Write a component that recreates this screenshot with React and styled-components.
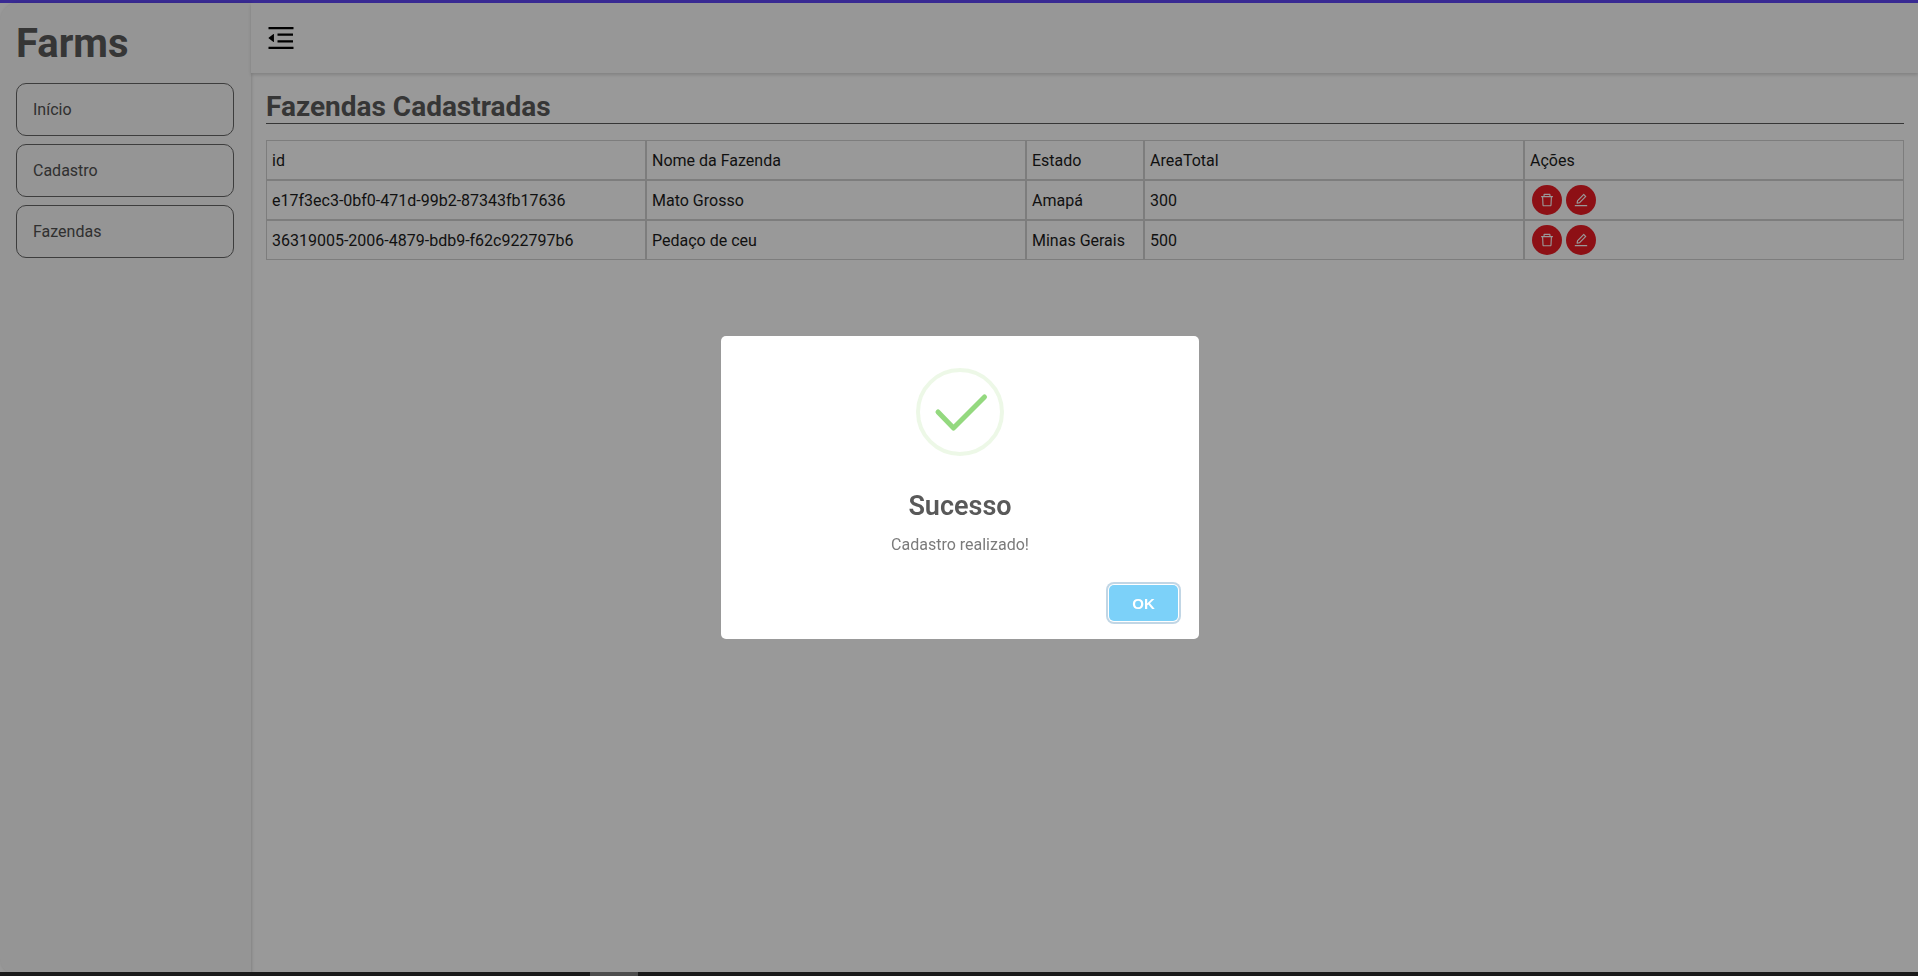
import styled, { createGlobalStyle } from "styled-components"
import { AiOutlineDelete, AiOutlineEdit, AiOutlineMenuFold } from "react-icons/ai"

const Global = createGlobalStyle`
  html, body { margin: 0; padding: 0; height: 100%; overflow: hidden; }
  body { font-family: Roboto, "Liberation Sans", sans-serif; background: #fff; }
  * { box-sizing: border-box; }
`
const Page = styled.div`
  height: 976px;
  display: flex;
  flex-direction: column;
`
const TopLine = styled.div`
  height: 3px;
  background: #5f47f5;
`
const Main = styled.div`
  flex: 1;
  display: flex;
  min-height: 0;
`
const Sidebar = styled.aside`
  width: 251px;
  padding: 16px 17px 13px 16px;
  background: #f8f8f8;
  border-radius: 18px 0 0 18px;
  box-shadow: 1px 0 3px rgba(0, 0, 0, 0.15);
`
const Logo = styled.h1`
  margin: 0 0 14px;
  font-size: 40px;
  line-height: 50px;
  font-weight: 700;
  color: #5a5a5a;
`
const NavList = styled.nav`
  display: flex;
  flex-direction: column;
  gap: 8px;
`
const NavItem = styled.a`
  height: 53px;
  padding-left: 16px;
  display: flex;
  align-items: center;
  font-size: 16px;
  color: #505050;
  border: 1px solid #666;
  border-radius: 10px;
`
const Content = styled.div`
  flex: 1;
  min-width: 0;
`
const Header = styled.header`
  height: 70px;
  padding: 0 14px;
  display: flex;
  align-items: center;
  font-size: 32px;
  color: #000;
  background: #fcfcfc;
  box-shadow: 0 2px 3px rgba(0, 0, 0, 0.15);
`
const Section = styled.section`
  padding: 16px 14px 0 15px;
`
const Title = styled.h2`
  margin: 0 0 16px;
  height: 35px;
  font-size: 28px;
  line-height: 35px;
  font-weight: 700;
  color: #5a5a5a;
  border-bottom: 1px solid #5a5a5a;
`
const Table = styled.table`
  width: 100%;
  table-layout: fixed;
  border-collapse: separate;
  border-spacing: 0;
  font-size: 16px;
  color: #1c1c1c;
`
const Th = styled.th`
  height: 40px;
  padding: 0 5px;
  font-weight: 400;
  text-align: left;
  border: 1px solid #d0d0d0;
  &:nth-child(1), &:nth-child(2), &:nth-child(4) { width: 380px; }
  &:nth-child(3) { width: 118px; }
`
const Td = styled.td`
  height: 40px;
  padding: 0 5px;
  border: 1px solid #d0d0d0;
`
const Actions = styled.div`
  display: flex;
  gap: 4px;
  padding-left: 2px;
`
const RoundButton = styled.button`
  width: 30px;
  height: 30px;
  padding: 0;
  display: flex;
  align-items: center;
  justify-content: center;
  font-size: 16px;
  color: #fff;
  background: #ec1b24;
  border: none;
  border-radius: 50%;
`
const BottomBar = styled.div`
  position: fixed;
  left: 0;
  right: 0;
  bottom: 0;
  z-index: 20;
  height: 4px;
  background: #1a1a1a;
`
const Thumb = styled.div`
  width: 48px;
  height: 4px;
  margin-left: 590px;
  background: #4d4d4d;
`
const Overlay = styled.div`
  position: fixed;
  inset: 0;
  z-index: 10;
  display: flex;
  align-items: flex-start;
  justify-content: center;
  padding: 336px 0 0 2px;
  background: rgba(0, 0, 0, 0.4);
`
const Modal = styled.div`
  width: 478px;
  height: 303px;
  padding-top: 32px;
  background: #fff;
  border-radius: 5px;
  display: flex;
  flex-direction: column;
  align-items: center;
`
const ModalTitle = styled.div`
  margin-top: 33px;
  font-size: 27px;
  line-height: 34px;
  font-weight: 600;
  color: #595959;
`
const ModalText = styled.div`
  margin-top: 11px;
  font-size: 16px;
  line-height: 22px;
  color: #7b7b7b;
`
const ModalFooter = styled.div`
  align-self: stretch;
  margin-top: 29px;
  padding-right: 21px;
  display: flex;
  justify-content: flex-end;
`
const OkButton = styled.button`
  width: 69px;
  height: 36px;
  padding: 0;
  font-family: "Liberation Sans", Arial, sans-serif;
  font-size: 15px;
  font-weight: 700;
  color: #fff;
  background: #7cd1f9;
  border: none;
  border-radius: 5px;
  box-shadow: 0 0 0 1px #fff, 0 0 0 3px rgba(43, 114, 165, 0.29);
`

const farms = [
  { id: "e17f3ec3-0bf0-471d-99b2-87343fb17636", name: "Mato Grosso", state: "Amapá", area: 300 },
  { id: "36319005-2006-4879-bdb9-f62c922797b6", name: "Pedaço de ceu", state: "Minas Gerais", area: 500 },
]

const SuccessIcon = () => (
  <svg width="88" height="88" viewBox="0 0 88 88">
    <circle cx="44" cy="44" r="42" fill="none" stroke="#a5dc86" strokeOpacity="0.2" strokeWidth="4" />
    <path d="M22 44l15.500 16 31-31" fill="none" stroke="#94d97f" strokeWidth="5" strokeLinecap="round" strokeLinejoin="round" />
  </svg>
)

const App = () => {
  return (
    <>
      <Global />
      <Page>
        <TopLine />
        <Main>
          <Sidebar>
            <Logo>Farms</Logo>
            <NavList>
              <NavItem>Início</NavItem>
              <NavItem>Cadastro</NavItem>
              <NavItem>Fazendas</NavItem>
            </NavList>
          </Sidebar>
          <Content>
            <Header>
              <AiOutlineMenuFold />
            </Header>
            <Section>
              <Title>Fazendas Cadastradas</Title>
              <Table>
                <thead>
                  <tr>
                    <Th>id</Th>
                    <Th>Nome da Fazenda</Th>
                    <Th>Estado</Th>
                    <Th>AreaTotal</Th>
                    <Th>Ações</Th>
                  </tr>
                </thead>
                <tbody>
                  {farms.map((farm) => (
                    <tr key={farm.id}>
                      <Td>{farm.id}</Td>
                      <Td>{farm.name}</Td>
                      <Td>{farm.state}</Td>
                      <Td>{farm.area}</Td>
                      <Td>
                        <Actions>
                          <RoundButton><AiOutlineDelete /></RoundButton>
                          <RoundButton><AiOutlineEdit /></RoundButton>
                        </Actions>
                      </Td>
                    </tr>
                  ))}
                </tbody>
              </Table>
            </Section>
          </Content>
        </Main>
      </Page>
      <Overlay>
        <Modal>
          <SuccessIcon />
          <ModalTitle>Sucesso</ModalTitle>
          <ModalText>Cadastro realizado!</ModalText>
          <ModalFooter>
            <OkButton>OK</OkButton>
          </ModalFooter>
        </Modal>
      </Overlay>
      <BottomBar>
        <Thumb />
      </BottomBar>
    </>
  )
}

export default App
